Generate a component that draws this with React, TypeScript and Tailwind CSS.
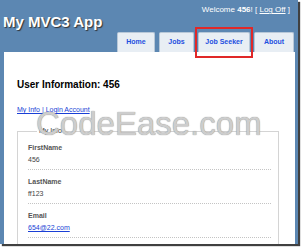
import React from 'react';

const tabs = [
    { label: 'Home', w: 'w-[38px]' },
    { label: 'Jobs', w: 'w-[35px]' },
    { label: 'Job Seeker', w: 'w-[52px]' },
    { label: 'About', w: 'w-[40px]' },
];

const fields = [
    { label: 'FirstName', value: '456' },
    { label: 'LastName', value: 'ff123' },
    { label: 'Email', value: '654@22.com', link: true },
];

const App: React.FC = () => {
    return (
        <div className="relative w-[301px] h-[250px] bg-white overflow-hidden font-['Liberation_Sans',Arial,sans-serif]">
            <div className="flex flex-col w-[298px] h-[244px] bg-[#5c87b2] shadow-[2px_2px_1px_rgba(0,0,0,0.75)]">
                {/* header */}
                <div className="flex h-[52px] shrink-0">
                    <h1 className="pl-[3px] pt-[12px] text-[15px] leading-[20px] font-bold text-white [text-shadow:1px_1px_1px_#333] whitespace-nowrap">
                        My MVC3 App
                    </h1>
                    <div className="flex flex-col flex-1 items-end">
                        <div className="pt-[5px] pr-[8px] text-[8px] leading-[10px] text-white whitespace-nowrap">
                            Welcome <b>456</b>! [ <span className="underline">Log Off</span> ]
                        </div>
                        <div className="flex gap-[4px] mt-auto pr-[4px]">
                            {tabs.map((t, i) => (
                                <div
                                    key={i}
                                    className={`${t.w} h-[20px] flex items-center justify-center bg-[#e8eef4] border border-b-0 border-[#b8c8d8] rounded-t-[2px] text-[7px] font-bold text-[#1e4fe0] whitespace-nowrap`}
                                >
                                    {t.label}
                                </div>
                            ))}
                        </div>
                    </div>
                </div>

                {/* main panel */}
                <div className="flex-1 ml-[4px] w-[291px] bg-white overflow-hidden pl-[13px]">
                    <h2 className="mt-[27px] text-[10px] leading-[12px] font-bold text-black">User Information: 456</h2>
                    <div className="mt-[15px] text-[7px] leading-[8px] text-[#1a3fd6] underline">My Info | Login Account</div>

                    <fieldset className="mt-[13px] w-[262px] border border-[#d4d4d4] pl-[10px] pr-[7px] pb-[20px]">
                        <legend className="ml-[9px] px-[2px] text-[7px] leading-[8px] text-[#333]">My Info</legend>
                        {fields.map((f, i) => (
                            <div key={i} className={`${i === 0 ? 'mt-[8px]' : 'mt-[7px]'} pb-[4px] border-b border-dotted border-[#c4c4c4]`}>
                                <div className="text-[7px] leading-[10px] font-bold text-[#555]">{f.label}</div>
                                {f.link ? (
                                    <div className="mt-[2px] text-[7px] leading-[10px] text-[#1a3fd6] underline">{f.value}</div>
                                ) : (
                                    <div className="mt-[2px] text-[7px] leading-[10px] text-[#444]">{f.value}</div>
                                )}
                            </div>
                        ))}
                    </fieldset>
                </div>
            </div>

            {/* watermark */}
            <div className="absolute left-[36px] top-[107px] text-[33px] leading-[33px] text-[#cdcdcd] [text-shadow:0_0_1px_#7a7a7a] whitespace-nowrap pointer-events-none">
                CodeEase.com
            </div>

            {/* highlight box */}
            <div className="absolute left-[195px] top-[27px] w-[58px] h-[31px] border-2 border-[#e02828] pointer-events-none" />
        </div>
    );
};

export default App;
